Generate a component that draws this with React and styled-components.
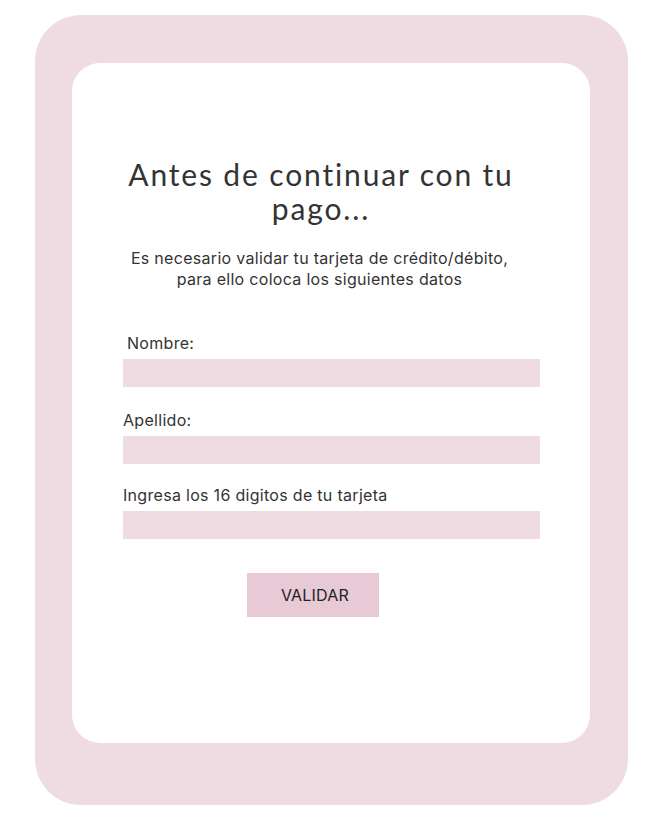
import React from "react";
import styled, { createGlobalStyle } from "styled-components";

const Global = createGlobalStyle`
  html, body { margin: 0; padding: 0; background: #ffffff; }
  body { font-family: Inter, "Liberation Sans", sans-serif; }
`;

const Page = styled.div`
  padding: 15px 0 0 35px;
`;

const Frame = styled.div`
  box-sizing: border-box;
  width: 593px;
  height: 790px;
  background: #eedce2;
  border-radius: 46px;
  padding: 48px 38px 62px 37px;
`;

const Card = styled.div`
  box-sizing: border-box;
  height: 100%;
  background: #ffffff;
  border-radius: 28px;
  display: flex;
  flex-direction: column;
  padding: 94px 50px 0 51px;
`;

const Title = styled.h1`
  margin: 0 auto;
  width: 420px;
  transform: translateX(-12px);
  font-family: Lato, sans-serif;
  font-weight: 400;
  font-size: 30px;
  line-height: 34px;
  letter-spacing: 1.85px;
  color: #333333;
  text-align: center;
`;

const Lead = styled.p`
  margin: 23px 0 0;
  transform: translateX(-12px);
  font-size: 16px;
  line-height: 21px;
  letter-spacing: 0.3px;
  color: #333333;
  text-align: center;
`;

const Form = styled.form`
  margin-top: 43px;
  display: flex;
  flex-direction: column;
`;

const Label = styled.label`
  display: block;
  font-size: 16px;
  line-height: 20px;
  letter-spacing: 0.3px;
  color: #333333;
  padding-left: ${(p) => p.$indent || 0}px;
  margin-top: ${(p) => p.$top || 0}px;
  margin-bottom: 6px;
`;

const Field = styled.input`
  box-sizing: border-box;
  width: 417px;
  height: 28px;
  border: none;
  outline: none;
  background: #eedce2;
  padding: 0 8px;
  font: inherit;
`;

const Button = styled.button`
  align-self: flex-start;
  margin: 34px 0 0 124px;
  width: 132px;
  height: 44px;
  border: none;
  background: #e8c9d6;
  color: #222222;
  font-family: Inter, sans-serif;
  font-size: 16px;
  letter-spacing: 0.2px;
  padding: 0 0 0 4px;
  cursor: pointer;
`;

export default function App() {
  return (
    <>
      <Global />
      <Page>
        <Frame>
          <Card>
            <Title>Antes de continuar con tu pago...</Title>
            <Lead>
              Es necesario validar tu tarjeta de crédito/débito,
              <br />
              para ello coloca los siguientes datos
            </Lead>
            <Form onSubmit={(e) => e.preventDefault()}>
              <Label $indent={4}>Nombre:</Label>
              <Field type="text" />
              <Label $top={23}>Apellido:</Label>
              <Field type="text" />
              <Label $top={21}>Ingresa los 16 digitos de tu tarjeta</Label>
              <Field type="text" />
              <Button type="submit">VALIDAR</Button>
            </Form>
          </Card>
        </Frame>
      </Page>
    </>
  );
}
